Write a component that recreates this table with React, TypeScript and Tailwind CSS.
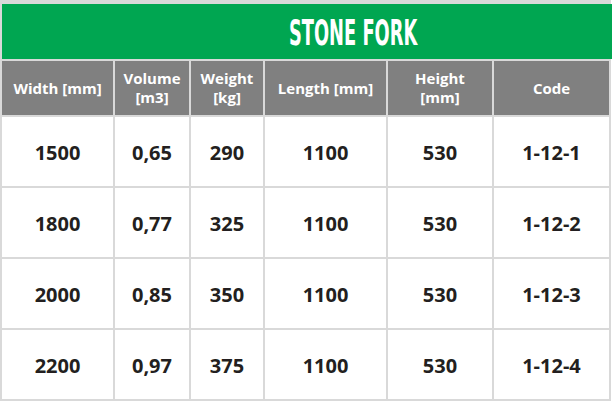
const columns = [
  { label: ["Width [mm]"] },
  { label: ["Volume", "[m3]"] },
  { label: ["Weight", "[kg]"] },
  { label: ["Length [mm]"] },
  { label: ["Height", "[mm]"] },
  { label: ["Code"] },
];

const rows = [
  ["1500", "0,65", "290", "1100", "530", "1-12-1"],
  ["1800", "0,77", "325", "1100", "530", "1-12-2"],
  ["2000", "0,85", "350", "1100", "530", "1-12-3"],
  ["2200", "0,97", "375", "1100", "530", "1-12-4"],
];

const grid =
  "grid grid-cols-[111px_74px_72px_121px_104px_115px] gap-[2px]";

export default function App() {
  return (
    <div
      className="h-[402px] w-[612px] overflow-hidden bg-white"
      style={{ fontFamily: '"Open Sans", "Liberation Sans", sans-serif' }}
    >
      <div className="flex w-[611px] flex-col gap-[2px] bg-[#d9d9d9] pb-[2px] pl-[2px] pt-[4px]">
        <div className="flex h-[55px] w-[610px] items-center bg-[#00a651] pl-[287px] pt-[3px]">
          <span
            className="inline-block origin-left scale-x-[0.55] text-[36px] font-bold leading-none text-white"
            style={{
              fontFamily:
                '"Liberation Sans Narrow", "DejaVu Sans Condensed", "Liberation Sans", sans-serif',
            }}
          >
            STONE FORK
          </span>
        </div>

        <div className={`${grid} pr-[2px]`}>
          {columns.map((c) => (
            <div
              key={c.label.join(" ")}
              className="flex h-[54px] flex-col items-center justify-center bg-[#808080] text-center text-[15px] font-bold leading-[19px] text-white"
            >
              {c.label.map((l) => (
                <span key={l}>{l}</span>
              ))}
            </div>
          ))}
        </div>

        {rows.map((r) => (
          <div key={r[5]} className={`${grid} pr-[2px]`}>
            {r.map((v, i) => (
              <div
                key={i}
                className="flex h-[69px] items-center justify-center bg-white pt-[2px] text-[20px] font-bold text-[#231f20]"
              >
                {v}
              </div>
            ))}
          </div>
        ))}
      </div>
    </div>
  );
}
